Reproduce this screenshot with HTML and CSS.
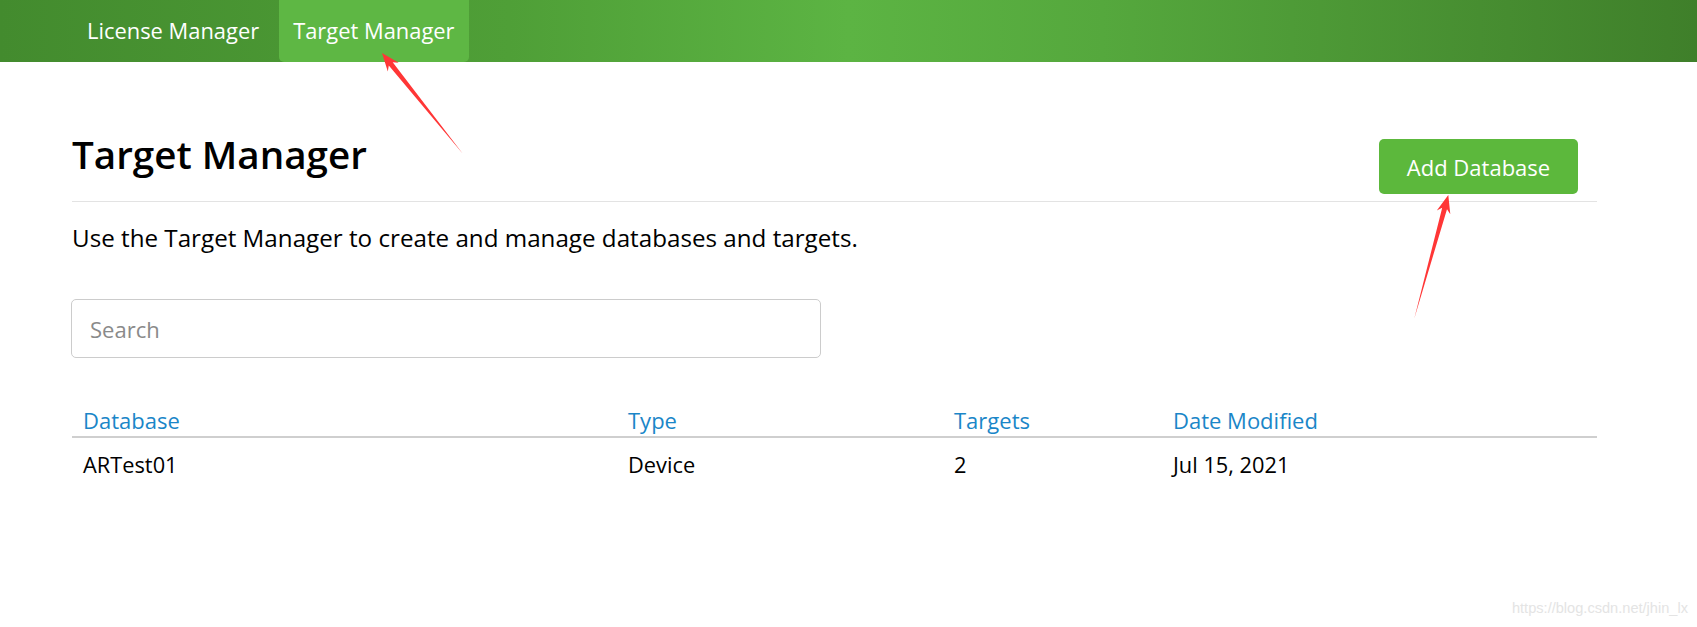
FILE: index.html
```html
<!DOCTYPE html>
<html lang="en">
<head>
<meta charset="utf-8">
<title>Target Manager</title>
<link rel="stylesheet" href="styles.css">
</head>
<body>
<nav class="topnav">
  <ul class="nav-list">
    <li class="nav-item">License Manager</li>
    <li class="nav-item active">Target Manager</li>
  </ul>
</nav>
<main class="container">
  <div class="title-row">
    <h1 class="page-title">Target Manager</h1>
    <button class="btn-add" type="button">Add Database</button>
  </div>
  <p class="lead">Use the Target Manager to create and manage databases and targets.</p>
  <input class="search" type="text" placeholder="Search">
  <table class="db-table">
    <colgroup>
      <col class="c1"><col class="c2"><col class="c3"><col class="c4">
    </colgroup>
    <thead>
      <tr><th>Database</th><th>Type</th><th>Targets</th><th>Date Modified</th></tr>
    </thead>
    <tbody>
      <tr><td>ARTest01</td><td>Device</td><td>2</td><td>Jul 15, 2021</td></tr>
    </tbody>
  </table>
</main>
<svg class="annotations" width="1697" height="627" viewBox="0 0 1697 627" xmlns="http://www.w3.org/2000/svg">
  <polygon fill="#ff3636" points="382,53 398.7,62.7 392.7,62.3 463,154 388.8,65.5 387.8,71.4"/>
  <polygon fill="#ff3636" points="1448.3,195 1450.3,214.3 1447,209.2 1414.3,318.5 1442.2,207.8 1436.8,210.5"/>
</svg>
<div class="watermark">https://blog.csdn.net/jhin_lx</div>
</body>
</html>
```

FILE: styles.css
```css
* { box-sizing: border-box; }
html, body {
  margin: 0;
  padding: 0;
  background: #fff;
}
body {
  font-family: "Open Sans", "Noto Sans", sans-serif;
  font-size: 22px;
  line-height: 32px;
  color: #000;
  position: relative;
  width: 1697px;
  height: 627px;
  overflow: hidden;
}
.topnav {
  height: 62px;
  background: linear-gradient(to right, #438b2e 0%, #4f9f37 30%, #5cb443 50%, #55a83d 65%, #3f7f2a 100%);
}
.nav-list {
  list-style: none;
  margin: 0;
  padding: 0 0 0 73px;
  display: flex;
  gap: 6px;
  height: 62px;
}
.nav-item {
  color: #fff;
  padding: 0 14px;
  display: flex;
  align-items: center;
  height: 62px;
  font-size: 21.9px;
}
.nav-item.active {
  background: #5eb744;
  border-radius: 0 0 5px 5px;
}
.container {
  margin-left: 72px;
  width: 1525px;
}
.title-row {
  display: flex;
  justify-content: space-between;
  align-items: flex-start;
  margin-top: 71px;
  padding-bottom: 7px;
  border-bottom: 1px solid #e3e3e3;
}
.page-title {
  margin: 0;
  font-size: 38.6px;
  line-height: 43px;
  font-weight: 600;
  color: #000;
}
.btn-add {
  margin-top: 6px;
  margin-right: 19px;
  width: 199px;
  height: 55px;
  background: #5cb83c;
  color: #fff;
  border: none;
  border-radius: 5px;
  font-family: "Open Sans", "Noto Sans", sans-serif;
  font-size: 22px;
  padding: 0;
}
.lead {
  margin: 20px 0 0;
  font-size: 24.2px;
}
.search {
  display: block;
  margin-top: 45px;
  margin-left: -1px;
  width: 750px;
  height: 59px;
  border: 1px solid #cccccc;
  border-radius: 5px;
  padding: 0 18px;
  font-family: "Open Sans", "Noto Sans", sans-serif;
  font-size: 22px;
  color: #333;
  outline: none;
}
.search::placeholder { color: #8a8a8a; }
.db-table {
  margin-top: 46px;
  width: 1525px;
  border-collapse: collapse;
  table-layout: fixed;
}
.c1 { width: 545px; }
.c2 { width: 326px; }
.c3 { width: 219px; }
.c4 { width: 435px; }
.db-table th {
  text-align: left;
  font-weight: 400;
  font-size: 22px;
  color: #1a86c8;
  padding: 0 11px 0;
  border-bottom: 2px solid #cfcfcf;
}
.db-table td {
  padding: 11px 11px 0;
  font-size: 21.8px;
  color: #000;
}
.annotations {
  position: absolute;
  top: 0;
  left: 0;
  pointer-events: none;
}
.watermark {
  position: absolute;
  right: 9px;
  top: 598px;
  font-family: "Liberation Sans", Arial, sans-serif;
  font-size: 14.6px;
  line-height: 20px;
  color: #e4e4e4;
}
```
